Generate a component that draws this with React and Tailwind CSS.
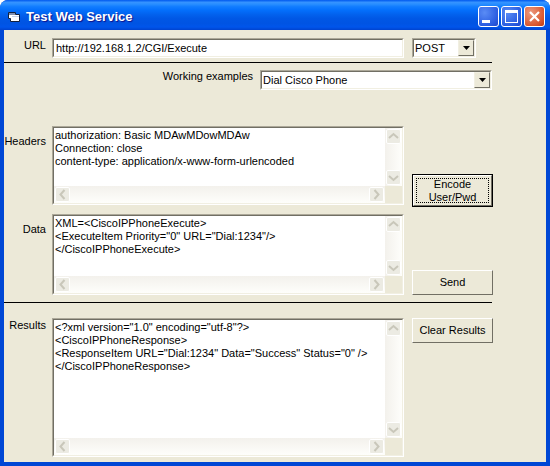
const font = "font-['Liberation_Sans',Arial,sans-serif] text-[11px] leading-[13px] text-black";

function Sunken({ className = '', children }) {
  return (
    <div className={`border border-t-[#aca899] border-l-[#aca899] border-r-white border-b-white ${className}`}>
      <div className="h-full w-full border border-t-[#716f64] border-l-[#716f64] border-r-[#f1efe2] border-b-[#f1efe2] bg-white flex min-h-0">
        {children}
      </div>
    </div>
  );
}

function Chevron({ dir }) {
  const paths = {
    up: 'M3 9 L7.5 5 L12 9',
    down: 'M3 6 L7.5 10 L12 6',
    left: 'M9.5 3 L5.5 7.5 L9.5 12',
    right: 'M5.5 3 L9.5 7.5 L5.5 12',
  };
  return (
    <div className="w-[15px] h-[15px] rounded-[2px] border border-white bg-[#ecebe3] flex items-center justify-center shrink-0">
      <svg width="13" height="13" viewBox="1 1 13 13" fill="none">
        <path d={paths[dir]} stroke="#c9c7ba" strokeWidth="2" />
      </svg>
    </div>
  );
}

function Memo({ className, lines }) {
  return (
    <Sunken className={className}>
      <div className="flex flex-col flex-1 min-w-0">
        <div className="flex flex-1 min-h-0">
          <div className={`flex-1 min-w-0 pl-[1px] pt-[1px] whitespace-pre ${font}`}>
            {lines.map((line) => (
              <div key={line}>{line}</div>
            ))}
          </div>
          <div className="w-[17px] bg-gradient-to-r from-[#f3f1ec] to-[#fefefb] flex flex-col justify-between items-center py-[1px]">
            <Chevron dir="up" />
            <Chevron dir="down" />
          </div>
        </div>
        <div className="h-[17px] flex">
          <div className="flex-1 bg-gradient-to-b from-[#f3f1ec] to-[#fefefb] flex justify-between items-center px-[1px]">
            <Chevron dir="left" />
            <Chevron dir="right" />
          </div>
          <div className="w-[17px] bg-[#ece9d8]" />
        </div>
      </div>
    </Sunken>
  );
}

function Arrow() {
  return (
    <div className="w-[16px] h-full bg-[#ece9d8] border border-t-[#f1efe2] border-l-[#f1efe2] border-r-[#716f64] border-b-[#716f64] flex items-center justify-center">
      <svg width="7" height="4" viewBox="0 0 7 4">
        <path d="M0 0 H7 L3.5 4 Z" fill="#000" />
      </svg>
    </div>
  );
}

function Combo({ className, value }) {
  return (
    <Sunken className={className}>
      <div className={`flex-1 min-w-0 pl-[1px] flex items-center ${font}`}>{value}</div>
      <Arrow />
    </Sunken>
  );
}

function Btn({ className = '', focused, children }) {
  if (focused) {
    return (
      <button className={`block bg-[#ece9d8] border border-black ${className}`}>
        <div className="h-full border border-t-white border-l-white border-r-[#716f64] border-b-[#716f64] p-[2px]">
          <div className={`h-full border border-dotted border-black flex items-center justify-center text-center ${font}`}>
            {children}
          </div>
        </div>
      </button>
    );
  }
  return (
    <button className={`block bg-[#ece9d8] border border-t-white border-l-white border-r-[#716f64] border-b-[#716f64] ${font} ${className}`}>
      {children}
    </button>
  );
}

function Label({ children, className = '' }) {
  return <div className={`w-[48px] shrink-0 text-right pr-[6px] ${font} ${className}`}>{children}</div>;
}

function WinButton({ className = '', children }) {
  return (
    <div className={`w-[21px] h-[21px] rounded-[3px] border border-white flex items-center justify-center ${className}`}>
      {children}
    </div>
  );
}

export default function App() {
  return (
    <div className="w-[550px] h-[466px] bg-white overflow-hidden">
      <div className="w-full h-full rounded-t-[8px] bg-[#0047d5] overflow-hidden flex flex-col">
        <div className="h-[30px] shrink-0 flex items-center pt-[3px] pl-[7px] pr-[5px] bg-[linear-gradient(180deg,#0058ee_0%,#3593ff_8%,#288eff_14%,#127dff_22%,#036ffc_34%,#0262ee_48%,#0057e5_62%,#0054e3_78%,#0055eb_90%,#0043cf_100%)]">
          <svg width="14" height="14" viewBox="0 0 14 14" className="shrink-0 mr-[5px]">
            <path d="M1.5 2.5 H8.5 V4.5 H12.5 V11.5 H3.5 V8.5 H1.5 Z" fill="#fff" stroke="#10203f" strokeWidth="1" />
            <path d="M2 3 H8 V5 H2 Z" fill="#7f8fb0" />
            <path d="M5 6 H12 V7 H5 Z" fill="#c4d0e8" />
          </svg>
          <div className="font-['Liberation_Sans',Arial,sans-serif] font-bold text-[13px] text-white [text-shadow:1px_1px_1px_#0f1089] flex-1">
            Test Web Service
          </div>
          <div className="flex gap-[2px]">
            <WinButton className="bg-[radial-gradient(circle_at_30%_30%,#5a8cf5,#2a5ce0_70%,#1e46c8)]">
              <div className="w-[8px] h-[3px] bg-white mt-[9px] mr-[5px]" />
            </WinButton>
            <WinButton className="bg-[radial-gradient(circle_at_30%_30%,#5a8cf5,#2a5ce0_70%,#1e46c8)]">
              <div className="w-[13px] h-[13px] border border-t-[3px] border-white" />
            </WinButton>
            <WinButton className="bg-[radial-gradient(circle_at_30%_30%,#ec9a80,#d9572e_70%,#b83a14)]">
              <svg width="13" height="13" viewBox="0 0 13 13">
                <path d="M2 2 L11 11 M11 2 L2 11" stroke="#fff" strokeWidth="2.2" />
              </svg>
            </WinButton>
          </div>
        </div>

        <div className="flex-1 min-h-0 mx-[4px] mb-[4px] bg-[#ece9d8] flex flex-col">
          <div className="mt-[8px] flex h-[20px]">
            <Label className="pt-[1px]">URL</Label>
            <Sunken className="w-[352px]">
              <div className={`pl-[2px] pt-[2px] ${font}`}>http://192.168.1.2/CGI/Execute</div>
            </Sunken>
            <Combo className="ml-[8px] w-[64px]" value="POST" />
          </div>
          <hr className="mt-[4px] w-[488px] border-t border-black" />
          <div className="mt-[7px] w-[488px] flex justify-end h-[20px]">
            <div className={`mr-[7px] ${font}`}>Working examples</div>
            <Combo className="w-[232px]" value="Dial Cisco Phone" />
          </div>

          <div className="mt-[36px] flex h-[79px]">
            <Label className="pt-[9px]">Headers</Label>
            <Memo
              className="w-[352px]"
              lines={[
                'authorization: Basic MDAwMDowMDAw',
                'Connection: close',
                'content-type: application/x-www-form-urlencoded',
              ]}
            />
            <Btn focused className="ml-[8px] mt-[48px] w-[81px] h-[33px]">
              Encode
              <br />
              User/Pwd
            </Btn>
          </div>

          <div className="mt-[9px] flex h-[81px]">
            <Label className="pt-[9px]">Data</Label>
            <Memo
              className="w-[352px]"
              lines={[
                'XML=<CiscoIPPhoneExecute>',
                '<ExecuteItem Priority="0" URL="Dial:1234"/>',
                '</CiscoIPPhoneExecute>',
              ]}
            />
            <Btn className="ml-[8px] mt-[56px] w-[81px] h-[25px]">Send</Btn>
          </div>

          <hr className="mt-[7px] w-[488px] border-t border-black" />

          <div className="mt-[15px] flex h-[139px]">
            <Label className="pt-[1px]">Results</Label>
            <Memo
              className="w-[352px]"
              lines={[
                '<?xml version="1.0" encoding="utf-8"?>',
                '<CiscoIPPhoneResponse>',
                '<ResponseItem URL="Dial:1234" Data="Success" Status="0" />',
                '</CiscoIPPhoneResponse>',
              ]}
            />
            <Btn className="ml-[8px] w-[81px] h-[25px]">Clear Results</Btn>
          </div>
        </div>
      </div>
    </div>
  );
}
